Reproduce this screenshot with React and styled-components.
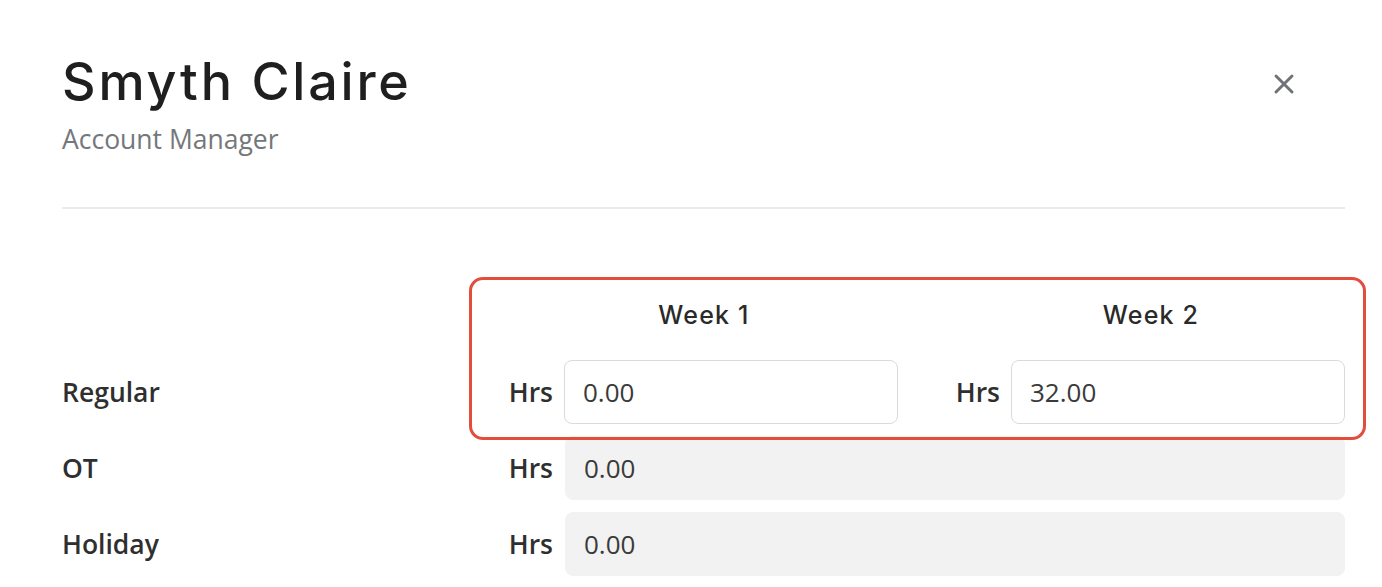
import React from "react";
import styled, { createGlobalStyle } from "styled-components";

const GlobalStyle = createGlobalStyle`
  html, body {
    margin: 0;
    padding: 0;
    background: #fff;
  }
  body {
    font-family: "Open Sans", "Liberation Sans", sans-serif;
    color: #2b2b2b;
  }
`;

const Page = styled.div`
  padding: 52px 37px 0 62px;
`;

const Header = styled.div`
  display: flex;
  justify-content: space-between;
  align-items: flex-start;
`;

const TitleBlock = styled.div`
  display: flex;
  flex-direction: column;
`;

const Name = styled.h1`
  margin: 0;
  font-family: "Inter", "Lato", sans-serif;
  font-weight: 500;
  font-size: 52px;
  line-height: 60px;
  letter-spacing: 2.8px;
  color: #1f1f1f;
`;

const Role = styled.div`
  font-size: 26.5px;
  line-height: 34px;
  margin-top: 10px;
  color: #74777b;
`;

const CloseButton = styled.button`
  border: none;
  background: none;
  padding: 0;
  margin: 20px 49px 0 0;
  width: 24px;
  height: 24px;
  cursor: pointer;
  display: flex;
`;

const Divider = styled.hr`
  border: none;
  height: 2px;
  background: #e9eaec;
  margin: 51px 0 0 0;
`;

const Grid = styled.div`
  display: grid;
  grid-template-columns: 389px minmax(0, 1fr) minmax(0, 1fr);
  column-gap: 57px;
  row-gap: 12px;
  margin-top: 91px;
`;

const Highlight = styled.div`
  grid-column: 2 / 4;
  grid-row: 1 / 3;
  margin: -23px -21px -16px -39px;
  border: 3px solid #e34d3c;
  border-radius: 14px;
  pointer-events: none;
`;

const WeekTitle = styled.div`
  grid-column: ${(p) => p.col};
  grid-row: 1;
  text-align: center;
  font-family: "Inter", "Lato", sans-serif;
  font-weight: 500;
  font-size: 25px;
  line-height: 30px;
  letter-spacing: 1.2px;
  color: #2a2a2a;
  padding-left: 2px;
  margin-bottom: 18px;
`;

const RowLabel = styled.div`
  grid-column: 1;
  grid-row: ${(p) => p.row};
  display: flex;
  align-items: center;
  font-weight: 600;
  font-size: 26.5px;
  color: #2f2f2f;
`;

const Cell = styled.div`
  grid-column: ${(p) => p.span};
  grid-row: ${(p) => p.row};
  display: flex;
  align-items: center;
  gap: ${(p) => (p.wide ? "12px" : "11px")};
`;

const Unit = styled.span`
  font-weight: 600;
  font-size: 26.5px;
  color: #2f2f2f;
  width: 45px;
  text-align: right;
  flex-shrink: 0;
`;

const Field = styled.input`
  flex: 1;
  min-width: 0;
  box-sizing: border-box;
  height: 64px;
  padding: 0 18px;
  font-family: "Open Sans", "Liberation Sans", sans-serif;
  font-size: 26px;
  color: #3a3a3a;
  border-radius: 8px;
  border: 1px solid ${(p) => (p.disabled ? "#f2f2f2" : "#d6dbe1")};
  background: ${(p) => (p.disabled ? "#f2f2f2" : "#fff")};
  outline: none;
  &:disabled {
    color: #3a3a3a;
    -webkit-text-fill-color: #3a3a3a;
    opacity: 1;
  }
`;

const CloseIcon = () => (
  <svg width="24" height="24" viewBox="0 0 24 24">
    <path
      d="M4 4 L20 20 M20 4 L4 20"
      stroke="#6f7378"
      strokeWidth="3"
      strokeLinecap="round"
      fill="none"
    />
  </svg>
);

const rows = [
  { label: "Regular", week1: "0.00", week2: "32.00" },
  { label: "OT", value: "0.00" },
  { label: "Holiday", value: "0.00" },
];

const App = () => (
  <>
    <GlobalStyle />
    <Page>
      <Header>
        <TitleBlock>
          <Name>Smyth Claire</Name>
          <Role>Account Manager</Role>
        </TitleBlock>
        <CloseButton aria-label="Close">
          <CloseIcon />
        </CloseButton>
      </Header>
      <Divider />
      <Grid>
        <WeekTitle col={2}>Week 1</WeekTitle>
        <WeekTitle col={3}>Week 2</WeekTitle>
        {rows.map((row, i) => (
          <React.Fragment key={row.label}>
            <RowLabel row={i + 2}>{row.label}</RowLabel>
            {row.value === undefined ? (
              <>
                <Cell span="2" row={i + 2}>
                  <Unit>Hrs</Unit>
                  <Field defaultValue={row.week1} />
                </Cell>
                <Cell span="3" row={i + 2}>
                  <Unit>Hrs</Unit>
                  <Field defaultValue={row.week2} />
                </Cell>
              </>
            ) : (
              <Cell span="2 / 4" row={i + 2} wide>
                <Unit>Hrs</Unit>
                <Field value={row.value} disabled readOnly />
              </Cell>
            )}
          </React.Fragment>
        ))}
        <Highlight />
      </Grid>
    </Page>
  </>
);

export default App;
